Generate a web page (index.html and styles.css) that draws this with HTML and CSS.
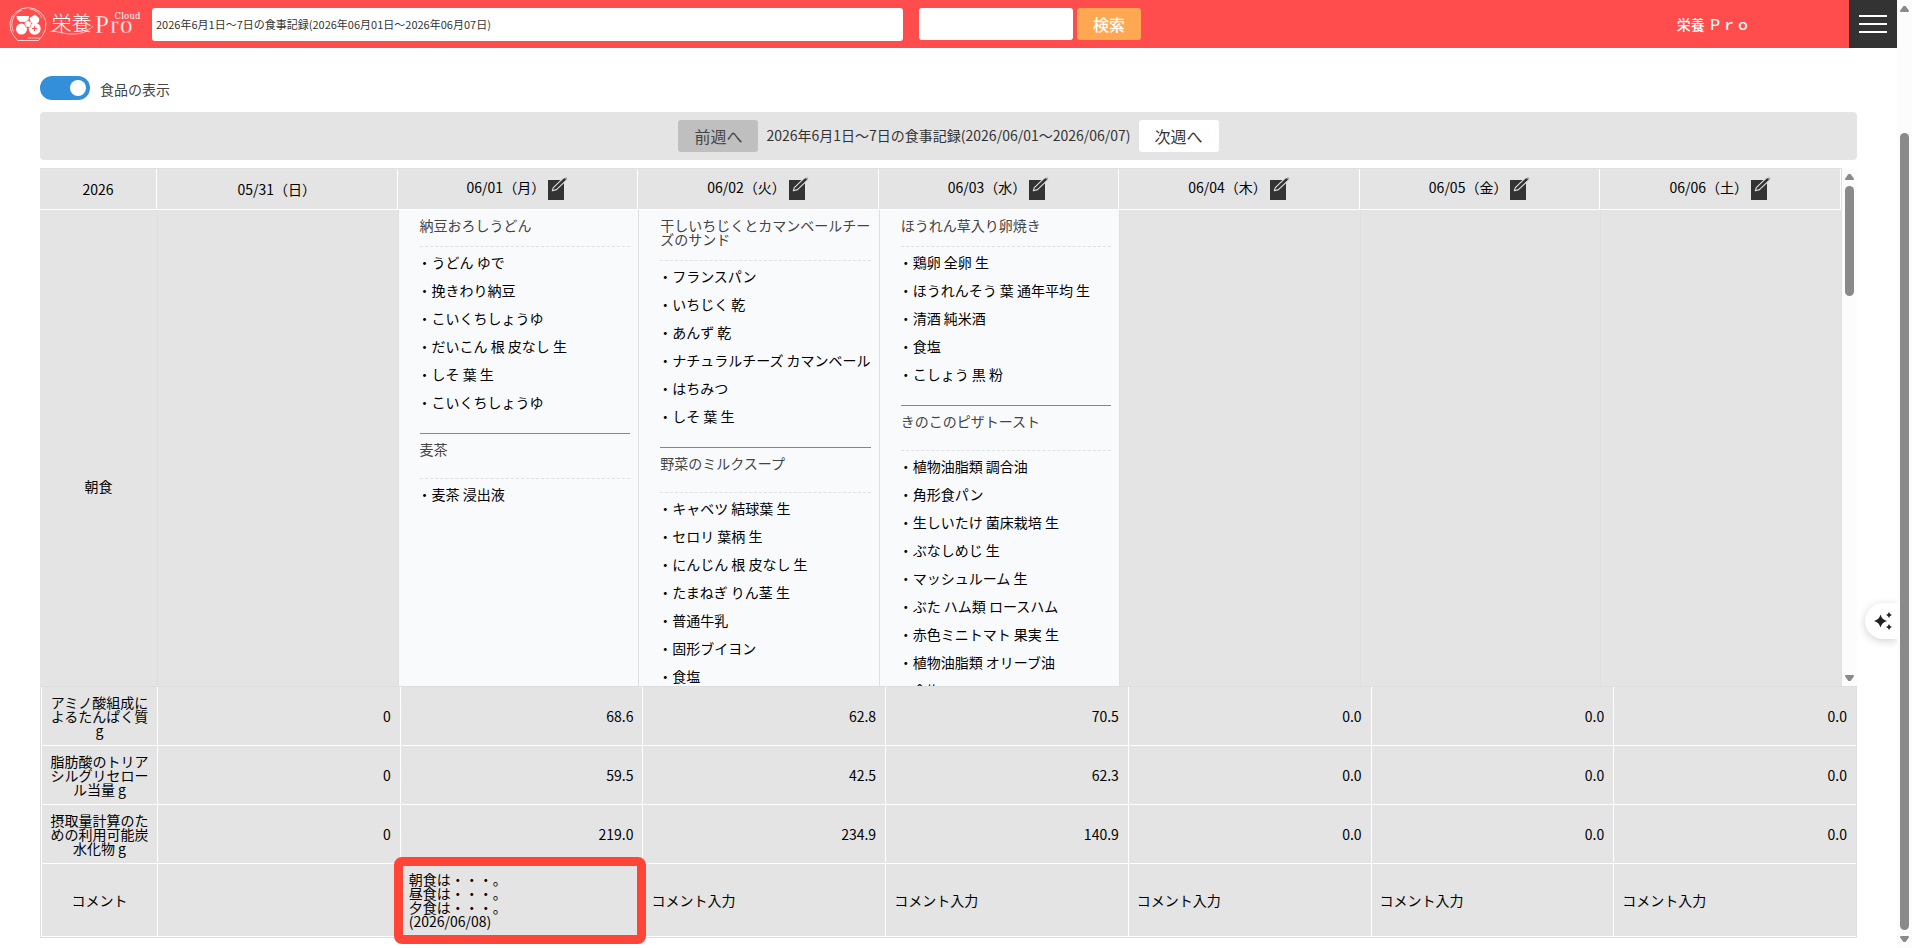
FILE: index.html
```html
<!DOCTYPE html>
<html lang="ja">
<head>
<meta charset="utf-8">
<title>栄養Pro Cloud</title>
<link rel="stylesheet" href="styles.css">
</head>
<body>
<svg width="0" height="0" class="defs">
  <symbol id="edit" viewBox="0 0 24 28">
    <path d="M2 8h16v20H2z" fill="#333"/>
    <path d="M6.300 18.800L7.300 15.600L17.500 5.900L19.900 5.300L21.300 6.300L20.700 7.900L10.500 17.600Z" fill="#333" stroke="#e4e4e4" stroke-width="1.100" stroke-linejoin="round"/>
    <path d="M18.500 6.200L20 5l1.300 1.200-1.200 1.500z" fill="#aaa"/>
  </symbol>
</svg>
<div class="app">
  <div class="page">
    <header class="top">
      <svg class="logo" width="144" height="48" viewBox="0 0 144 48">
        <g fill="none" stroke="#fff" stroke-opacity=".8">
          <path d="M17.500 40.500L13.500 35.500A18 17.500 0 1 1 42.500 35.500L38.500 40.500Z" stroke-width=".9"/>
          <path d="M13.500 31.500A15.500 15.500 0 0 1 22 10M30 9a15.500 15.500 0 0 1 12 9M28 38h12" stroke-width=".8"/>
          <path d="M50 31.500c9-1 12 3 24 2.500 8-.3 14-2.500 19-8" stroke-width=".8"/>
        </g>
        <g fill="#fff">
          <path d="M16.500 16H29l-1 6h-8l-3-3z"/>
          <path d="M29.500 18L35 14.500L39 18Q40 21.500 37.500 23H31z"/>
          <circle cx="21.500" cy="29" r="5.500"/>
          <circle cx="34.700" cy="28.700" r="6"/>
          <path d="M28 20.200l3.600 2.600-1.400 4.300h-4.400l-1.400-4.300z" stroke="#ff4d4d" stroke-width=".6" stroke-linejoin="round"/>
        </g>
        <path d="M34.500 26v5M32 28.500h5" stroke="#ff4d4d" stroke-width="1"/>
        <text class="logo-kanji" x="51.500" y="31">栄養</text>
        <text class="logo-pro" x="95" y="33">Pro</text>
        <text class="logo-cloud" x="114.500" y="19">Cloud</text>
      </svg>
      <div class="field title-field">2026年6月1日～7日の食事記録(2026年06月01日～2026年06月07日)</div>
      <div class="field search-field"></div>
      <div class="search-btn">検索</div>
      <div class="user">栄養 Ｐｒｏ</div>
      <div class="menu"><i></i><i></i><i></i></div>
    </header>
    <main class="main">
      <div class="switch-row"><span class="switch"><i></i></span><span class="switch-label">食品の表示</span></div>
      <div class="week-nav">
        <span class="btn prev">前週へ</span>
        <span class="week-title">2026年6月1日～7日の食事記録(2026/06/01～2026/06/07)</span>
        <span class="btn next">次週へ</span>
      </div>
      <div class="pane">
        <div class="grid">
          <div class="row head">
            <div>2026</div>
            <div>05/31（日）</div>
            <div class="ed">06/01（月）<svg><use href="#edit"/></svg></div>
            <div class="ed">06/02（火）<svg><use href="#edit"/></svg></div>
            <div class="ed">06/03（水）<svg><use href="#edit"/></svg></div>
            <div class="ed">06/04（木）<svg><use href="#edit"/></svg></div>
            <div class="ed">06/05（金）<svg><use href="#edit"/></svg></div>
            <div class="ed">06/06（土）<svg><use href="#edit"/></svg></div>
          </div>
          <div class="row meals">
            <div class="meal-name">朝食</div>
            <div></div>
            <div class="day">
              <section><h3>納豆おろしうどん</h3>
                <ul><li>・うどん ゆで</li><li>・挽きわり納豆</li><li>・こいくちしょうゆ</li><li>・だいこん 根 皮なし 生</li><li>・しそ 葉 生</li><li>・こいくちしょうゆ</li></ul></section>
              <section><h3>麦茶</h3>
                <ul><li>・麦茶 浸出液</li></ul></section>
            </div>
            <div class="day">
              <section><h3>干しいちじくとカマンベールチーズのサンド</h3>
                <ul><li>・フランスパン</li><li>・いちじく 乾</li><li>・あんず 乾</li><li>・ナチュラルチーズ カマンベール</li><li>・はちみつ</li><li>・しそ 葉 生</li></ul></section>
              <section><h3>野菜のミルクスープ</h3>
                <ul><li>・キャベツ 結球葉 生</li><li>・セロリ 葉柄 生</li><li>・にんじん 根 皮なし 生</li><li>・たまねぎ りん茎 生</li><li>・普通牛乳</li><li>・固形ブイヨン</li><li>・食塩</li></ul></section>
            </div>
            <div class="day">
              <section><h3>ほうれん草入り卵焼き</h3>
                <ul><li>・鶏卵 全卵 生</li><li>・ほうれんそう 葉 通年平均 生</li><li>・清酒 純米酒</li><li>・食塩</li><li>・こしょう 黒 粉</li></ul></section>
              <section><h3>きのこのピザトースト</h3>
                <ul><li>・植物油脂類 調合油</li><li>・角形食パン</li><li>・生しいたけ 菌床栽培 生</li><li>・ぶなしめじ 生</li><li>・マッシュルーム 生</li><li>・ぶた ハム類 ロースハム</li><li>・赤色ミニトマト 果実 生</li><li>・植物油脂類 オリーブ油</li><li>・食塩</li></ul></section>
            </div>
            <div></div><div></div><div></div>
          </div>
        </div>
        <div class="scrollbar inner"><b class="up"></b><span class="thumb"></span><b class="down"></b></div>
      </div>
      <div class="totals">
        <div class="trow"><div class="name">アミノ酸組成によるたんぱく質 g</div><div>0</div><div>68.6</div><div>62.8</div><div>70.5</div><div>0.0</div><div>0.0</div><div>0.0</div></div>
        <div class="trow"><div class="name">脂肪酸のトリアシルグリセロール当量 g</div><div>0</div><div>59.5</div><div>42.5</div><div>62.3</div><div>0.0</div><div>0.0</div><div>0.0</div></div>
        <div class="trow"><div class="name">摂取量計算のための利用可能炭水化物 g</div><div>0</div><div>219.0</div><div>234.9</div><div>140.9</div><div>0.0</div><div>0.0</div><div>0.0</div></div>
        <div class="trow comments"><div class="name">コメント</div><div></div><div class="marked"><p>朝食は・・・。<br>昼食は・・・。<br>夕食は・・・。<br>(2026/06/08)</p></div><div>コメント入力</div><div>コメント入力</div><div>コメント入力</div><div>コメント入力</div><div>コメント入力</div></div>
      </div>
    </main>
    <div class="assist">
      <svg width="20" height="20" viewBox="0 0 20 20" fill="#222"><path d="M7.500 3.500Q8.800 8.700 14 10Q8.800 11.300 7.500 16.500Q6.200 11.300 1 10Q6.200 8.700 7.500 3.500z"/><path d="M16 1q.7 2.300 3 3q-2.300.7-3 3q-.7-2.300-3-3q2.300-.7 3-3zM16 13q.7 2.300 3 3q-2.300.7-3 3q-.7-2.300-3-3q2.300-.7 3-3z"/></svg>
    </div>
  </div>
  <div class="scrollbar outer"><b class="up"></b><span class="thumb"></span><b class="down"></b></div>
</div>
</body>
</html>
```
FILE: styles.css
```css
* { box-sizing: border-box; }
body { margin: 0; background: #fff; color: #000; font: 14px/14px "Noto Sans CJK JP", "Noto Sans", sans-serif; overflow: hidden; }
h3, ul, p { margin: 0; padding: 0; font: inherit; list-style: none; }
.defs { position: absolute; }
.app { display: flex; width: 1912px; height: 948px; }
.page { width: 1897px; position: relative; }

.top { display: flex; height: 48px; background: #ff4d4d; align-items: flex-start; }
.logo { flex: none; margin-right: 8px; }
.logo text { fill: #fff; }
.logo-kanji { font-size: 20px; font-family: "Noto Sans CJK JP", sans-serif; font-weight: 300; }
.logo-pro { font: 25px "Liberation Serif", serif; letter-spacing: 1.4px; stroke: #ff4d4d; stroke-width: .4px; }
.logo-cloud { font: 8.5px "DejaVu Serif", serif; letter-spacing: .2px; }
.field { background: #fff; border-radius: 3px; margin-top: 8px; color: #333; }
.title-field { width: 751px; height: 33px; padding-left: 4px; font-size: 11px; line-height: 33px; margin-right: 16px; }
.search-field { width: 154px; height: 32px; margin-right: 4px; }
.search-btn { width: 64px; height: 32px; margin-top: 8px; border-radius: 3px; background: #ffa851; color: #fff; font-size: 16px; line-height: 33px; text-align: center; font-weight: 500; }
.user { margin-left: auto; margin-right: 99px; line-height: 49px; color: #fff; font-weight: 500; }
.menu { width: 48px; height: 48px; background: #333; display: flex; flex-direction: column; align-items: center; justify-content: center; gap: 6px; }
.menu i { width: 28px; height: 2px; background: #fff; }

.main { padding: 28px 40px 0; }
.switch-row { display: flex; height: 24px; gap: 10px; }
.switch { width: 50px; height: 24px; border-radius: 12px; background: #348fdb; padding: 4px; display: flex; justify-content: flex-end; }
.switch i { width: 16px; height: 16px; border-radius: 50%; background: #fff; }
.switch-label { line-height: 27px; color: #444; }
.week-nav { display: flex; align-items: center; justify-content: center; gap: 8px; height: 48px; margin-top: 12px; background: #e4e4e4; border-radius: 4px; color: #333; }
.week-title { padding-bottom: 2px; }
.btn { width: 80px; height: 32px; border-radius: 3px; text-align: center; font-size: 16px; line-height: 32px; }
.prev { background: #bfbfbf; color: #444; }
.next { background: #fff; }

.pane { display: flex; height: 519px; margin-top: 8px; overflow: hidden; border-bottom: 1px solid #dcdfe1; }
.grid { width: 1802px; height: 594px; border-right: 1px solid #dedfe1; }
.row { display: grid; grid-template-columns: 117px repeat(7, minmax(0, 1fr)); }
.head { height: 42px; border-top: 1px solid #dfdfdf; }
.head > div { display: flex; align-items: center; justify-content: center; background: #e4e4e4; border-right: 1px solid #fff; border-bottom: 1px solid #fff; }
.head .ed { padding: 0 0 4px 2px; }
.head svg { width: 24px; height: 28px; margin: 0 0 2px 1px; }
.meals { height: 553px; }
.meals > div { background: #e4e4e4; border-left: 1px solid #dedfe1; }
.meals > .meal-name { border-left: 0; text-align: center; line-height: 552px; }
.meals > .day { background: #f9fafc; padding: 8px 8px 0 21px; }
.day h3 { color: #444; padding-bottom: 14px; border-bottom: 1px dashed #dee0e2; }
.day ul { padding: 1px 0 17px; }
.day li { height: 28px; line-height: 28px; white-space: nowrap; margin-left: -2px; }
.day section + section { border-top: 1px solid #85878a; padding-top: 8px; }
.day section + section h3 { padding-bottom: 22px; }

.totals { width: 1817px; border: solid #dedfe1; border-width: 0 1px 1px; }
.trow { display: grid; grid-template-columns: 116px repeat(7, minmax(0, 1fr)); height: 59px; }
.trow > div { display: flex; align-items: center; justify-content: flex-end; padding: 0 9px 0 8px; background: #e4e4e4; border-left: 1px solid #fff; border-bottom: 1px solid #fff; }
.trow > .name { justify-content: center; text-align: center; padding: 0 7px 1px; }
.trow.comments { height: 73px; }
.trow.comments > div { justify-content: flex-start; padding-bottom: 1px; }
.trow.comments > .name { justify-content: center; }
.marked { position: relative; }
.marked::after { content: ""; position: absolute; left: -7px; right: -4px; top: -7px; bottom: -8px; border: 9px solid #ff4438; border-radius: 8px; z-index: 1; }

.scrollbar { width: 15px; display: flex; flex-direction: column; align-items: center; background: #fcfcfc; }
.thumb { width: 9px; border-radius: 5px; background: #8a8a8a; }
.scrollbar b { width: 9px; height: 6px; background: #8a8a8a; clip-path: polygon(38% 0, 62% 0, 100% 80%, 95% 100%, 5% 100%, 0 80%); }
.scrollbar .down { transform: scaleY(-1); margin-top: auto; }
.inner { padding: 6px 0 5px; }
.inner .thumb { height: 110px; margin-top: 6px; }
.outer { padding: 6px 0; }
.outer .thumb { height: 797px; margin-top: 121px; }
.assist { position: absolute; right: 0; top: 603px; width: 32px; height: 36px; padding: 8px 0 0 8px; border-radius: 18px 0 0 18px; background: #fff; box-shadow: 0 2px 8px rgba(0,0,0,.18); clip-path: inset(-12px 0 -16px -12px); }
```
